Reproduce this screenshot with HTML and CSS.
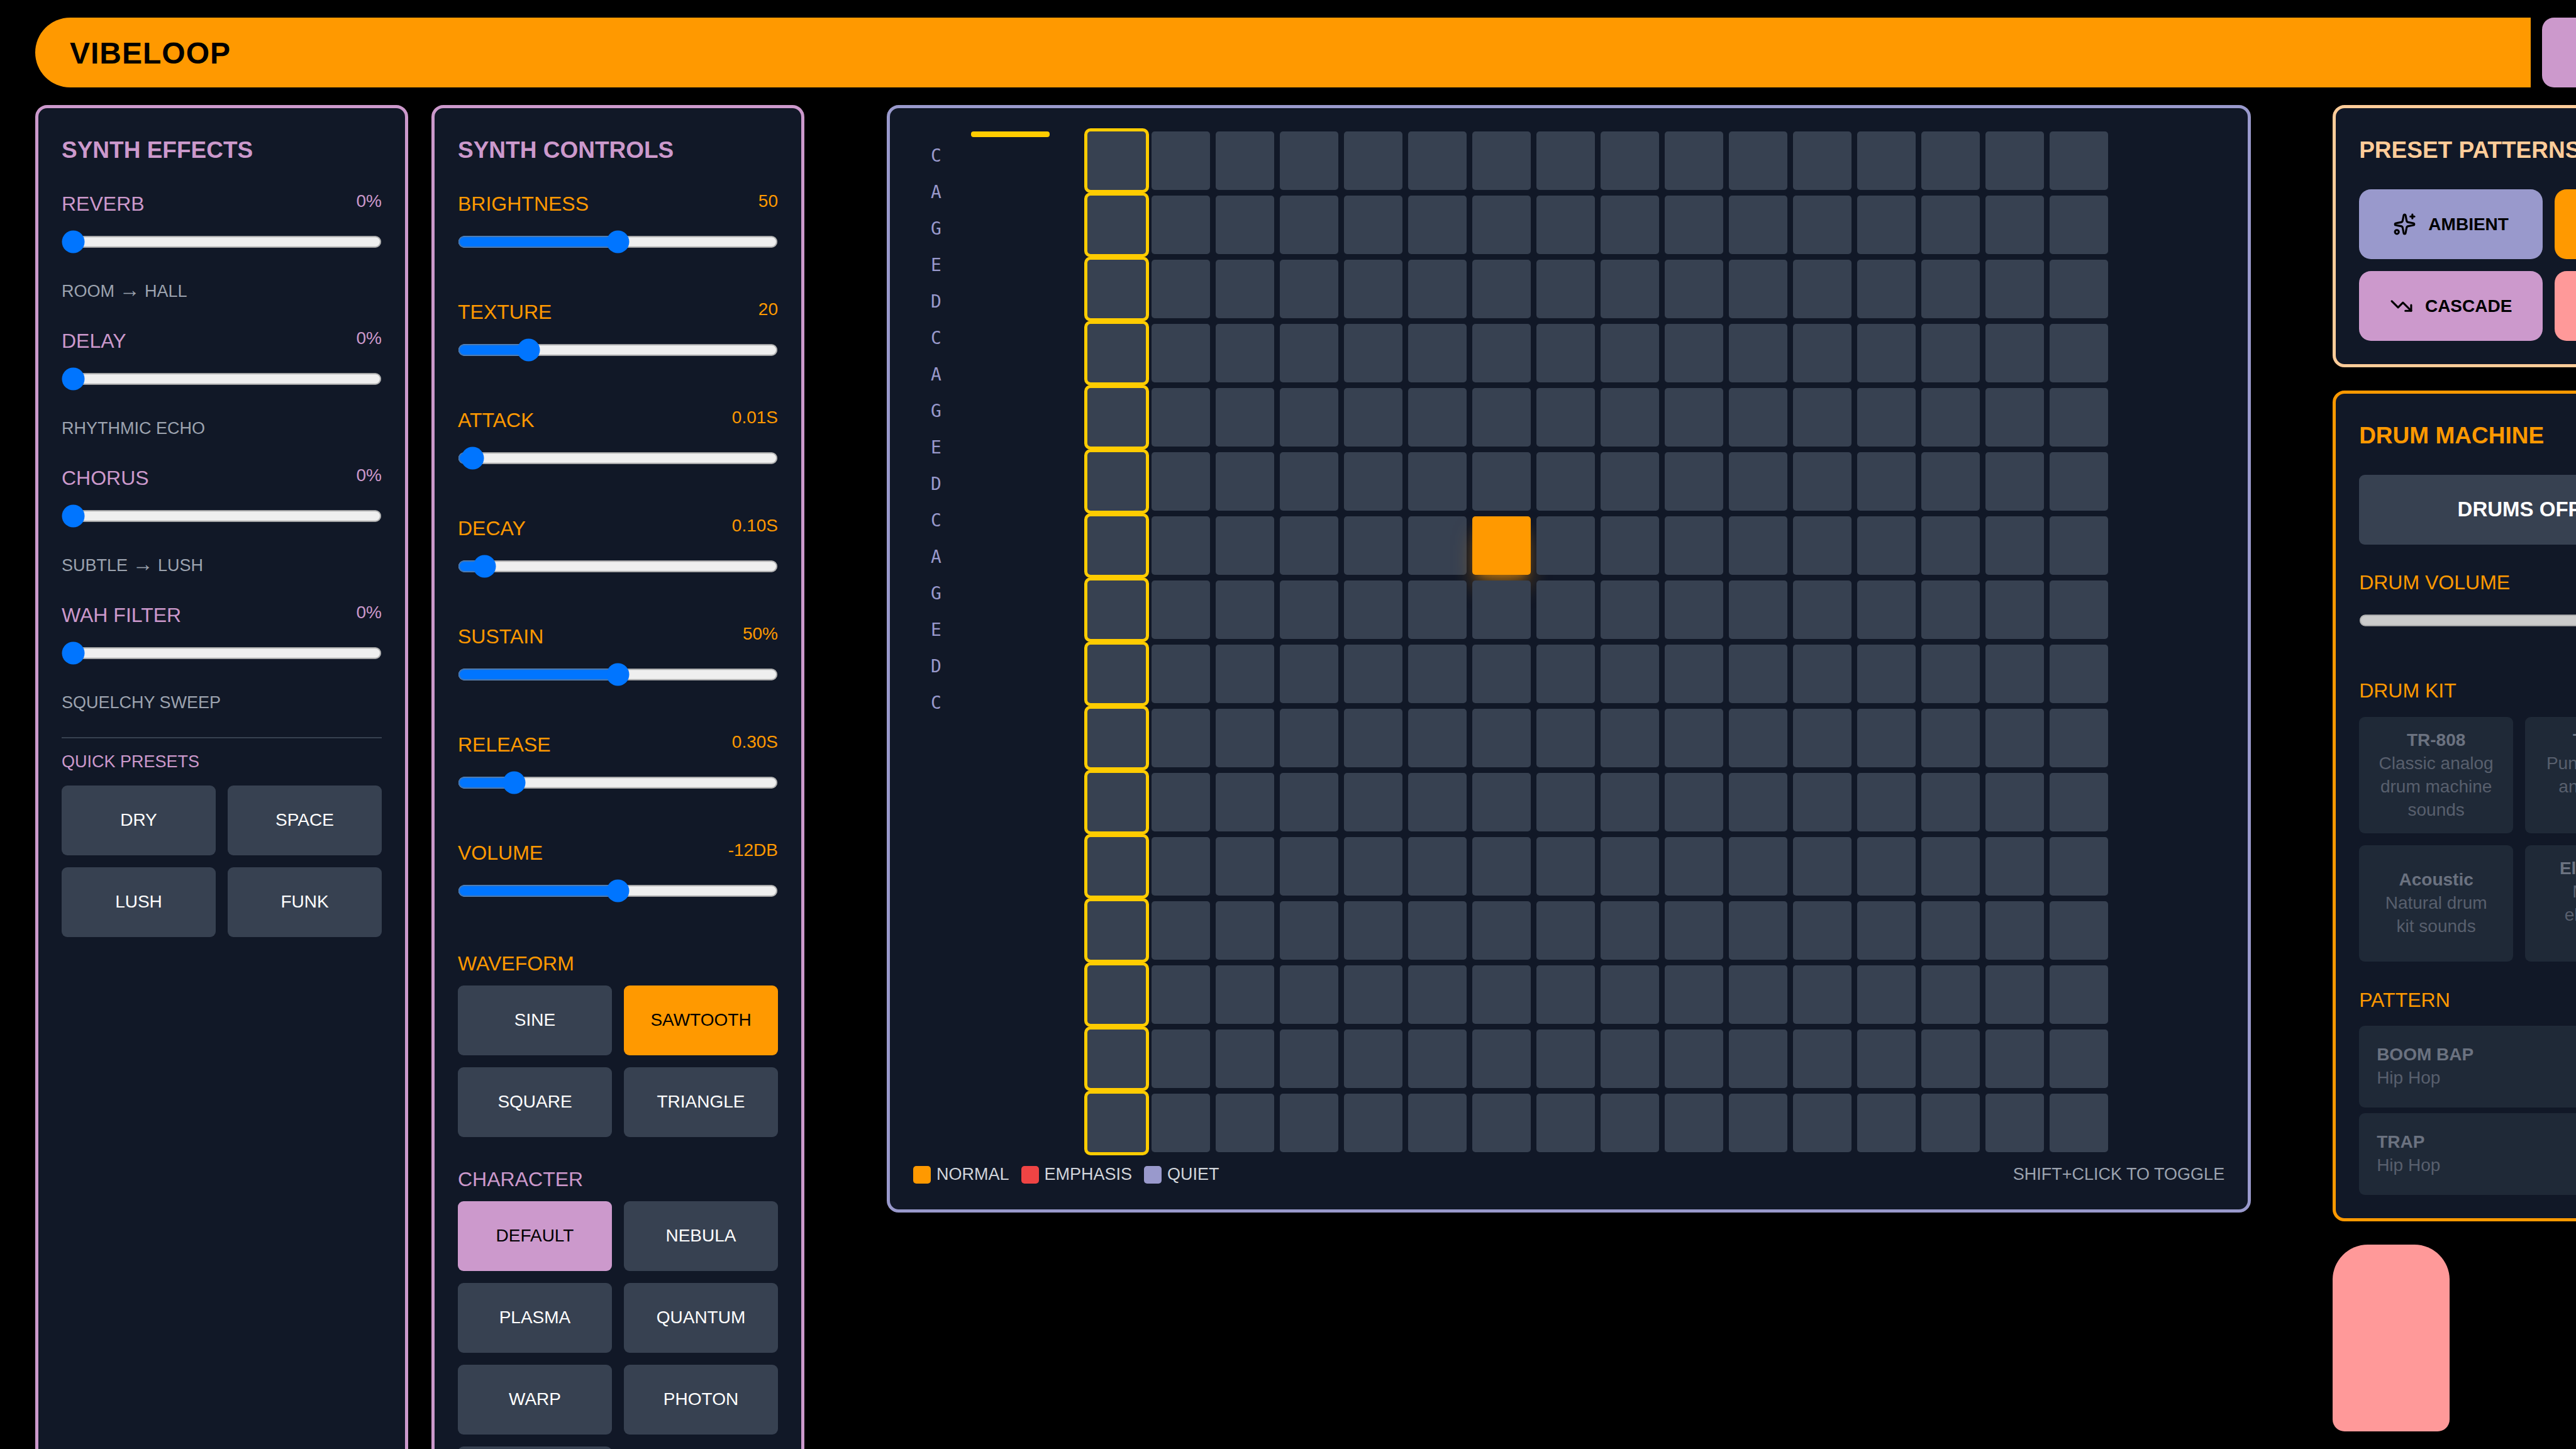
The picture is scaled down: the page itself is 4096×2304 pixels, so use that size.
FILE: index.html
```html
<!DOCTYPE html>
<html lang="en">
<head>
<meta charset="utf-8">
<title>Vibeloop</title>
<link rel="stylesheet" href="styles.css">
</head>
<body>
<div class="app">
  <header class="topbar">
    <div class="topbar-main"><h1 class="brand">VIBELOOP</h1></div>
    <div class="topbar-cap"></div>
  </header>

  <main class="layout">
    <section class="panel panel-lilac">
      <h2 class="panel-title">SYNTH EFFECTS</h2>
      <div class="effects">
        <div class="control">
          <div class="control-head"><label for="reverb">REVERB</label><output for="reverb">0%</output></div>
          <input class="slider" type="range" id="reverb" min="0" max="100" value="0">
          <p class="hint">ROOM <span class="arrow">→</span> HALL</p>
        </div>
        <div class="control">
          <div class="control-head"><label for="delay">DELAY</label><output for="delay">0%</output></div>
          <input class="slider" type="range" id="delay" min="0" max="100" value="0">
          <p class="hint">RHYTHMIC ECHO</p>
        </div>
        <div class="control">
          <div class="control-head"><label for="chorus">CHORUS</label><output for="chorus">0%</output></div>
          <input class="slider" type="range" id="chorus" min="0" max="100" value="0">
          <p class="hint">SUBTLE <span class="arrow">→</span> LUSH</p>
        </div>
        <div class="control">
          <div class="control-head"><label for="wah">WAH FILTER</label><output for="wah">0%</output></div>
          <input class="slider" type="range" id="wah" min="0" max="100" value="0">
          <p class="hint">SQUELCHY SWEEP</p>
        </div>
      </div>
      <div class="quick">
        <h3 class="quick-title">QUICK PRESETS</h3>
        <div class="button-grid">
          <button type="button" class="btn">DRY</button>
          <button type="button" class="btn">SPACE</button>
          <button type="button" class="btn">LUSH</button>
          <button type="button" class="btn">FUNK</button>
        </div>
      </div>
    </section>

    <section class="panel panel-lilac">
      <h2 class="panel-title">SYNTH CONTROLS</h2>
      <div class="synth">
        <div class="control">
          <div class="control-head"><label for="brightness">BRIGHTNESS</label><output for="brightness">50</output></div>
          <input class="slider" type="range" id="brightness" min="0" max="100" value="50">
        </div>
        <div class="control">
          <div class="control-head"><label for="texture">TEXTURE</label><output for="texture">20</output></div>
          <input class="slider" type="range" id="texture" min="0" max="100" value="20">
        </div>
        <div class="control">
          <div class="control-head"><label for="attack">ATTACK</label><output for="attack">0.01S</output></div>
          <input class="slider" type="range" id="attack" min="0" max="100" value="1">
        </div>
        <div class="control">
          <div class="control-head"><label for="decay">DECAY</label><output for="decay">0.10S</output></div>
          <input class="slider" type="range" id="decay" min="0" max="100" value="5">
        </div>
        <div class="control">
          <div class="control-head"><label for="sustain">SUSTAIN</label><output for="sustain">50%</output></div>
          <input class="slider" type="range" id="sustain" min="0" max="100" value="50">
        </div>
        <div class="control">
          <div class="control-head"><label for="release">RELEASE</label><output for="release">0.30S</output></div>
          <input class="slider" type="range" id="release" min="0" max="100" value="15">
        </div>
        <div class="control">
          <div class="control-head"><label for="volume">VOLUME</label><output for="volume">-12DB</output></div>
          <input class="slider" type="range" id="volume" min="0" max="100" value="50">
        </div>
      </div>
      <div class="choice choice-wave">
        <h3 class="choice-title">WAVEFORM</h3>
        <div class="button-grid">
          <button type="button" class="btn">SINE</button>
          <button type="button" class="btn btn-orange" aria-pressed="true">SAWTOOTH</button>
          <button type="button" class="btn">SQUARE</button>
          <button type="button" class="btn">TRIANGLE</button>
        </div>
      </div>
      <div class="choice choice-character">
        <h3 class="choice-title">CHARACTER</h3>
        <div class="button-grid">
          <button type="button" class="btn btn-lilac" aria-pressed="true">DEFAULT</button>
          <button type="button" class="btn">NEBULA</button>
          <button type="button" class="btn">PLASMA</button>
          <button type="button" class="btn">QUANTUM</button>
          <button type="button" class="btn">WARP</button>
          <button type="button" class="btn">PHOTON</button>
          <button type="button" class="btn" aria-label="Void"></button>
        </div>
      </div>
    </section>

    <section class="panel panel-blue sequencer">
      <div class="board">
        <div class="notes">
          <span>C</span><span>A</span><span>G</span><span>E</span><span>D</span>
          <span>C</span><span>A</span><span>G</span><span>E</span><span>D</span>
          <span>C</span><span>A</span><span>G</span><span>E</span><span>D</span>
          <span>C</span>
        </div>
        <div class="steps">
          <div class="playhead"></div>
          <div class="cells" id="cells"></div>
        </div>
      </div>
      <div class="legend">
        <ul class="legend-keys">
          <li><i class="swatch swatch-normal"></i>NORMAL</li>
          <li><i class="swatch swatch-emphasis"></i>EMPHASIS</li>
          <li><i class="swatch swatch-quiet"></i>QUIET</li>
        </ul>
        <p class="legend-tip">SHIFT+CLICK TO TOGGLE</p>
      </div>
    </section>

    <div class="rail">
      <section class="panel panel-peach">
        <h2 class="panel-title">PRESET PATTERNS</h2>
        <div class="preset-grid">
          <button type="button" class="preset preset-blue">
            <svg class="icon" viewBox="0 0 24 24" aria-hidden="true"><path d="M11.017 2.814a1 1 0 0 1 1.966 0l1.051 5.558a2 2 0 0 0 1.594 1.594l5.558 1.051a1 1 0 0 1 0 1.966l-5.558 1.051a2 2 0 0 0-1.594 1.594l-1.051 5.558a1 1 0 0 1-1.966 0l-1.051-5.558a2 2 0 0 0-1.594-1.594l-5.558-1.051a1 1 0 0 1 0-1.966l5.558-1.051a2 2 0 0 0 1.594-1.594z"/><path d="M20 2v4"/><path d="M22 4h-4"/><circle cx="4" cy="20" r="2"/></svg>
            AMBIENT
          </button>
          <button type="button" class="preset preset-orange" aria-label="Techno"></button>
          <button type="button" class="preset preset-lilac">
            <svg class="icon" viewBox="0 0 24 24" aria-hidden="true"><path d="M16 17h6v-6"/><path d="m22 17-8.5-8.5-5 5L2 7"/></svg>
            CASCADE
          </button>
          <button type="button" class="preset preset-rose" aria-label="Random"></button>
        </div>
      </section>

      <section class="panel panel-orange">
        <h2 class="panel-title">DRUM MACHINE</h2>
        <button type="button" class="btn btn-wide">DRUMS OFF</button>
        <div class="control drum-volume">
          <div class="control-head"><label for="drum-volume">DRUM VOLUME</label></div>
          <input class="slider" type="range" id="drum-volume" min="0" max="100" value="80" disabled>
        </div>
        <h3 class="drum-title kit-title">DRUM KIT</h3>
        <div class="kit-grid">
          <button type="button" class="kit" disabled><strong>TR-808</strong><span>Classic analog drum machine sounds</span></button>
          <button type="button" class="kit" disabled><strong>TR-909</strong><span>Punchy house and techno beats</span></button>
          <button type="button" class="kit" disabled><strong>Acoustic</strong><span>Natural drum kit sounds</span></button>
          <button type="button" class="kit" disabled><strong>Electronic</strong><span>Modern electronic drums</span></button>
        </div>
        <h3 class="drum-title pattern-title">PATTERN</h3>
        <div class="pattern-list">
          <button type="button" class="pattern" disabled><strong>BOOM BAP</strong><span>Hip Hop</span></button>
          <button type="button" class="pattern" disabled><strong>TRAP</strong><span>Hip Hop</span></button>
        </div>
      </section>

      <div class="rail-foot"></div>
    </div>
  </main>
</div>
<script src="script.js"></script>
</body>
</html>
```
FILE: styles.css
```css
:root {
  --orange: #ff9900;
  --lilac: #cc99cc;
  --blue: #9999cc;
  --peach: #ffcc99;
  --rose: #ff9999;
  --yellow: #ffcc00;
  --surface: #111827;
  --key: #374151;
  --key-off: #1f2937;
}

* {
  box-sizing: border-box;
  margin: 0;
  padding: 0;
}

body {
  height: 100vh;
  overflow: hidden;
  background: #000;
  color: #fff;
  font-family: "Liberation Sans", Arial, sans-serif;
  font-size: 28px;
  line-height: 37px;
}

button {
  border: 0;
  font: inherit;
  color: inherit;
}

/* The control surface runs past the right edge of the window */
.app {
  width: 106.4vw;
  padding: 28px 56px;
}

.topbar {
  display: flex;
  gap: 18px;
  height: 111px;
  margin-bottom: 28px;
}

.topbar-main {
  flex: 1;
  display: flex;
  align-items: center;
  padding: 2px 0 0 55px;
  border-radius: 56px 0 0 56px;
  background: var(--orange);
}

.brand {
  color: #000;
  font-size: 48px;
  line-height: 56px;
  letter-spacing: 1px;
}

.topbar-cap {
  flex: 0 0 260px;
  border-radius: 19px;
  background: var(--lilac);
}

.layout {
  display: grid;
  grid-template-columns: 593px 593px minmax(0, 1fr) 593px;
  gap: 37px;
}

.panel {
  padding: 37px;
  border: 5px solid;
  border-radius: 19px;
  background: var(--surface);
}

.panel-lilac { border-color: var(--lilac); color: var(--lilac); }
.panel-blue { border-color: var(--blue); }
.panel-peach { border-color: var(--peach); color: var(--peach); }
.panel-orange { border-color: var(--orange); color: var(--orange); }

.panel-title {
  margin-bottom: 34px;
  padding-top: 2px;
  font-size: 37px;
  line-height: 56px;
}

/* Sliders */
.control {
  display: flex;
  flex-direction: column;
}

.control-head {
  display: flex;
  justify-content: space-between;
  align-items: flex-start;
  margin-bottom: 19px;
}

.control-head label {
  font-size: 32px;
  line-height: 46px;
}

.slider {
  display: block;
  width: 100%;
  height: 16px;
  zoom: 2.3125;
}

.hint {
  margin-top: 42px;
  color: #9ca3af;
  font-size: 27px;
}

.arrow {
  font-size: 33px;
  line-height: 0;
}

.effects {
  display: grid;
  gap: 37px;
}

.synth {
  display: grid;
  gap: 70px;
  color: var(--orange);
}

.quick {
  margin-top: 36px;
  padding-top: 19px;
  border-top: 2px solid var(--key);
}

.quick-title {
  margin-bottom: 19px;
  font-size: 27px;
  font-weight: 400;
}

/* Buttons */
.button-grid {
  display: grid;
  grid-template-columns: 1fr 1fr;
  gap: 19px;
}

.btn {
  height: 111px;
  padding-bottom: 2px;
  border-radius: 9px;
  background: var(--key);
  color: #fff;
}

.btn-orange { background: var(--orange); color: #000; }
.btn-lilac { background: var(--lilac); color: #000; }

.btn-wide {
  width: 100%;
  font-size: 33px;
  font-weight: 700;
}

.choice-title,
.drum-title {
  font-size: 32px;
  font-weight: 400;
  line-height: 46px;
}

.choice-title { margin-bottom: 12px; }

.choice-wave {
  margin-top: 74px;
  color: var(--orange);
}

.choice-character { margin-top: 44px; }

/* Step sequencer */
.sequencer {
  align-self: start;
  margin: 0 93px 0 94px;
}

.board {
  display: flex;
  gap: 19px;
}

.notes {
  display: flex;
  flex-direction: column;
  flex: 0 0 73px;
  gap: 21px;
  padding-top: 20px;
  color: var(--blue);
  font-family: "DejaVu Sans Mono", monospace;
  text-align: center;
}

.steps {
  position: relative;
  flex: 1;
  display: flex;
  justify-content: center;
}

.playhead {
  position: absolute;
  top: 0;
  left: 0;
  width: 6.25%;
  height: 9px;
  border-radius: 4px;
  background: var(--yellow);
}

.cells {
  display: grid;
  grid-template-columns: repeat(16, 93px);
  gap: 9px;
}

.cell {
  height: 93px;
  border-radius: 5px;
  background: var(--key);
}

.cell-current { box-shadow: 0 0 0 5px var(--yellow); }

.cell-on {
  background: var(--orange);
  box-shadow: 0 23px 35px -7px rgba(255, 153, 0, 0.5), 0 9px 14px -9px rgba(255, 153, 0, 0.5);
}

.legend {
  display: flex;
  justify-content: space-between;
  margin-top: 17px;
  font-size: 27px;
}

.legend-keys {
  display: flex;
  gap: 19px;
  color: #d1d5db;
  list-style: none;
}

.legend-keys li {
  display: flex;
  align-items: center;
  gap: 9px;
}

.swatch {
  width: 28px;
  height: 28px;
  border-radius: 5px;
}

.swatch-normal { background: var(--orange); }
.swatch-emphasis { background: #ef4444; }
.swatch-quiet { background: var(--blue); }

.legend-tip { color: #9ca3af; }

/* Right rail */
.rail {
  display: flex;
  flex-direction: column;
  gap: 37px;
}

.preset-grid {
  display: grid;
  grid-template-columns: 292px 292px;
  gap: 19px;
}

.preset {
  display: flex;
  align-items: center;
  justify-content: center;
  gap: 19px;
  height: 111px;
  border-radius: 19px;
  color: #000;
  font-weight: 700;
}

.preset-blue { background: var(--blue); }
.preset-orange { background: var(--orange); }
.preset-lilac { background: var(--lilac); }
.preset-rose { background: var(--rose); }

.icon {
  width: 37px;
  height: 37px;
  fill: none;
  stroke: currentColor;
  stroke-width: 2;
  stroke-linecap: round;
  stroke-linejoin: round;
}

.drum-volume { margin-top: 37px; }

.kit-title { margin: 70px 0 19px; }
.pattern-title { margin: 38px 0 18px; }

.kit-grid {
  display: grid;
  grid-template-columns: 1fr 1fr;
  gap: 19px;
}

.kit,
.pattern {
  display: flex;
  flex-direction: column;
  border-radius: 9px;
  background: var(--key-off);
  color: #6b7280;
}

.kit {
  align-items: center;
  justify-content: center;
  min-height: 185px;
  padding: 17px 28px 19px;
}

.kit span,
.pattern span { opacity: 0.75; }

.pattern-list {
  display: grid;
  gap: 9px;
}

.pattern {
  padding: 27px 28px 29px;
  text-align: left;
}

.rail-foot {
  width: 186px;
  height: 297px;
  border-radius: 56px 56px 19px 19px;
  background: var(--rose);
}
```
FILE: script.js
```js
// Builds the 16 x 16 step grid: rows are notes, columns are beats.
const SIZE = 16;
const currentStep = 0;
const activeNotes = new Set(["6:6"]);
const cells = document.getElementById("cells");

for (let row = 0; row < SIZE; row++) {
  for (let step = 0; step < SIZE; step++) {
    const cell = document.createElement("button");
    cell.type = "button";
    cell.className = "cell";
    cell.setAttribute("aria-label", `Note ${row + 1}, step ${step + 1}`);
    if (step === currentStep) cell.classList.add("cell-current");
    if (activeNotes.has(`${row}:${step}`)) cell.classList.add("cell-on");
    cells.appendChild(cell);
  }
}
```
